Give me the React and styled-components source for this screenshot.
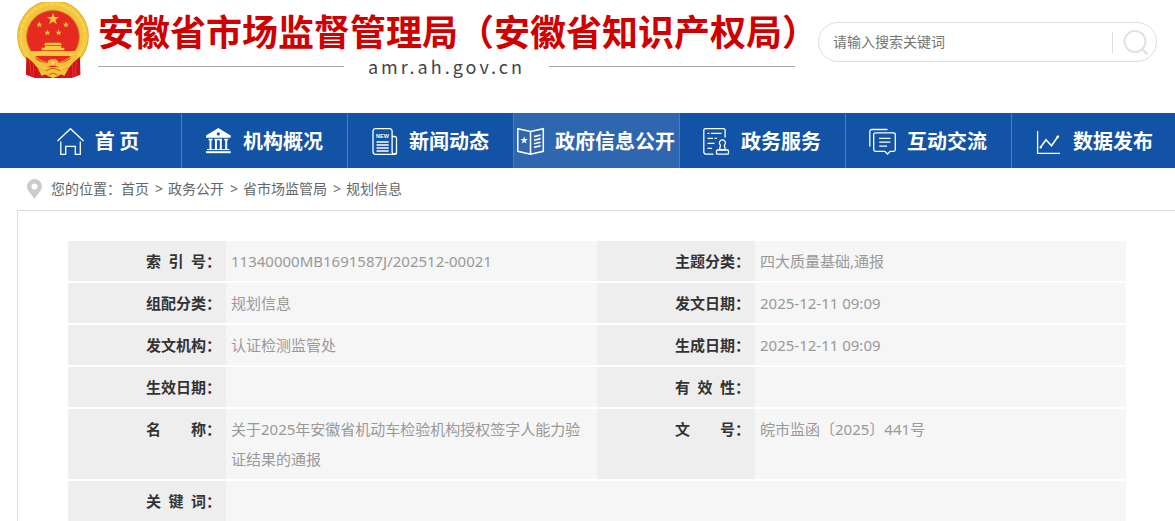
import React, { useState } from "react";
import styled, { createGlobalStyle } from "styled-components";

const GlobalStyle = createGlobalStyle`
  * {
    box-sizing: border-box;
  }
  body {
    margin: 0;
    background: #fff;
    color: #666;
    font-family: "Noto Sans", "Noto Sans CJK SC", sans-serif;
    font-size: 14px;
    overflow-x: hidden;
  }
  a {
    color: inherit;
    text-decoration: none;
  }
`;

const Header = styled.header`
  display: flex;
  justify-content: space-between;
  height: 113px;
  padding: 0 18px 0 17px;
`;
const Brand = styled.a`
  display: flex;
  gap: 9px;
  padding-top: 2px;
`;
const BrandText = styled.div`
  width: 697px;
  padding-top: 12px;
`;
const Title = styled.h1`
  margin: 0;
  color: #d00000;
  font-family: "Liberation Sans", "Noto Sans CJK SC", sans-serif;
  font-size: 36px;
  font-weight: 700;
  line-height: 40px;
  white-space: nowrap;
`;
const Domain = styled.div`
  display: flex;
  align-items: center;
  gap: 24px;
  height: 24px;
  color: #444;
  font-family: "Noto Sans CJK SC", sans-serif;
  font-size: 18px;
  line-height: 24px;
  letter-spacing: 3px;
  &::before,
  &::after {
    content: "";
    flex: 1;
    height: 1px;
    background: #aaa;
  }
`;
const Search = styled.form`
  display: flex;
  align-items: center;
  flex: 0 0 339px;
  height: 40px;
  margin-top: 22px;
  padding: 0 8px 0 14px;
  border: 1px solid #ddd;
  border-radius: 20px;
`;
const SearchInput = styled.input`
  flex: 1;
  min-width: 0;
  padding: 0;
  border: 0;
  outline: 0;
  background: none;
  color: #666;
  font: inherit;
  line-height: 20px;
  &::placeholder {
    color: #757575;
    opacity: 1;
  }
`;
const SearchButton = styled.button`
  display: flex;
  justify-content: flex-end;
  width: 36px;
  height: 21px;
  padding: 0;
  border: 0;
  border-left: 1px solid #ddd;
  background: none;
  cursor: pointer;
  svg {
    overflow: visible;
  }
`;

const Nav = styled.nav`
  display: flex;
  height: 55px;
  padding-left: 16px;
  overflow: hidden;
  background: #1253a5;
`;
const NavItem = styled.a`
  display: flex;
  flex: 1 0 166px;
  align-items: center;
  justify-content: center;
  gap: 10px;
  padding-right: 1px;
  border-right: 1px solid #4a7dbf;
  background: ${(p) => (p.$active ? "#2f66b0" : "transparent")};
  color: #fff;
  font-family: "Noto Sans CJK SC", sans-serif;
  font-size: 20px;
  font-weight: 700;
  line-height: 28px;
  white-space: nowrap;
`;
const NavIcon = styled.svg`
  flex: none;
  width: 28px;
  height: 29px;
  fill: none;
  stroke: #fff;
  stroke-width: 1.3;
`;

const Crumbs = styled.div`
  display: flex;
  align-items: center;
  height: 42px;
  padding-left: 27px;
  line-height: 20px;
  svg {
    margin-right: 9px;
  }
`;
const Separator = styled.span`
  padding: 0 5px 0 6px;
`;

const Panel = styled.main`
  margin-left: 17px;
  padding: 28px 49px 0 50px;
  border-top: 1px solid #ddd;
  border-left: 1px solid #ddd;
`;
const Table = styled.table`
  width: 100%;
  table-layout: fixed;
  border-collapse: separate;
  border-spacing: 0 2px;
  font-size: 15px;
  line-height: 30px;
`;
const Label = styled.th`
  width: 158px;
  padding: 5px;
  background: #eee;
  color: #333;
  font-weight: 700;
  text-align: right;
  vertical-align: top;
  white-space: nowrap;
`;
const LabelText = styled.span`
  display: inline-block;
  width: 4em;
  text-align: justify;
  text-align-last: justify;
`;
const Value = styled.td`
  padding: 5px;
  background: #f6f6f6;
  color: #999;
  vertical-align: top;
`;

const menu = [
  {
    name: "首 页",
    icon: (
      <>
        <path d="M.5 15 13.5 2.7 26.5 15" />
        <path d="M3.8 15.5V28.3H8.7V20.3H18.3V28.3H23.3V15.5" />
      </>
    ),
  },
  {
    name: "机构概况",
    icon: (
      <>
        <path
          d="M13.3 2 25.7 9.6V11.8H1V9.6ZM13.3 6.3a1.6 1.6 0 1 0 0 3.2 1.6 1.6 0 0 0 0-3.2Z"
          fill="#fff"
          fillRule="evenodd"
          stroke="none"
        />
        <path d="M3.5 13.5H7.5M9.5 13.5H17M19.2 13.5H23.2" />
        <path d="M5.5 13V23.5M11 13V23.5M15.8 13V23.5M21.2 13V23.5" strokeWidth="2" />
        <path d="M2 23.6H24.6" strokeWidth="1" />
        <path d="M1 26.2H25.7" strokeWidth="2" />
      </>
    ),
  },
  {
    name: "新闻动态",
    icon: (
      <>
        <path d="M21.3 28.3H4.5A2.5 2.5 0 0 1 2 25.8V5A2.3 2.3 0 0 1 4.3 2.7H18.8A2.3 2.3 0 0 1 21.1 5V25.8A2.2 2.2 0 0 0 25.5 25.8V12.5A2 2 0 0 0 23.5 10.5H21.1M21 28.3H24A2 2 0 0 0 25.5 26" />
        <path d="M5.5 16H17.7M5.5 19H17.7M5.5 22H17.7M5.5 25H17.7" />
        <text
          x="5"
          y="11.5"
          fontFamily="Liberation Sans, sans-serif"
          fontSize="5.5"
          fontWeight="700"
          fill="#fff"
          stroke="none"
        >
          NEW
        </text>
      </>
    ),
  },
  {
    name: "政府信息公开",
    active: true,
    icon: (
      <>
        <path d="M.8 2.8 13.5 5.6 26.3 2.8V25.3L13.5 28.2.8 25.3ZM13.5 5.6V28" strokeWidth="1.5" />
        <path
          d="M7.2 10.2 8.1 13H11L8.7 14.7 9.6 17.6 7.2 15.9 4.8 17.6 5.7 14.7 3.4 13H6.3Z"
          fill="#fff"
          stroke="none"
        />
        <path
          d="M17 10.6 23.6 9M17 14.2 23.6 12.6M17 17.8 23.6 16.2M17 21.4 23.6 19.8"
          strokeWidth="1.6"
        />
      </>
    ),
  },
  {
    name: "政务服务",
    icon: (
      <>
        <path d="M10.5 28.2H3A2.2 2.2 0 0 1 .8 26V4.2A1.5 1.5 0 0 1 2.3 2.7H20.6A1.5 1.5 0 0 1 22.1 4.2V11.5" />
        <path d="M4.5 7.3H6.5M8 7.3H18.5M4.5 12.3H10M11.5 12.3H14M4.5 17.3H11.5M4.5 22.3H9" />
        <path d="M17.5 19.2A3 3 0 1 1 21.3 19.2L22.3 23.7H16.5Z" />
        <rect x="13.5" y="24" width="12" height="4.2" rx="1" />
      </>
    ),
  },
  {
    name: "互动交流",
    icon: (
      <>
        <path d="M.8 20.5V5.5A2 2 0 0 1 2.8 3.5H18.5" />
        <path d="M6.5 6.8H24.5A1.8 1.8 0 0 1 26.3 8.6V23.6A1.8 1.8 0 0 1 24.5 25.4H21.2L18.5 28 15.8 25.4H6.5A1.8 1.8 0 0 1 4.7 23.6V8.6A1.8 1.8 0 0 1 6.5 6.8Z" />
        <path d="M10.2 12.3H21.4M10.2 16.2H21.4M10.2 20.1H18" />
      </>
    ),
  },
  {
    name: "数据发布",
    icon: (
      <>
        <path d="M2.6 5V27.3H25" />
        <path d="M5.8 21 11 13.8 16.5 19.8 22.6 11" strokeWidth="1.6" />
        <circle cx="5.8" cy="21.2" r="1.2" fill="#fff" stroke="none" />
        <circle cx="22.8" cy="10.8" r="1.4" fill="#fff" stroke="none" />
      </>
    ),
  },
];

const crumbs = ["首页", "政务公开", "省市场监管局", "规划信息"];

const rows = [
  ["索 引 号", "11340000MB1691587J/202512-00021", "主题分类", "四大质量基础,通报"],
  ["组配分类", "规划信息", "发文日期", "2025-12-11 09:09"],
  ["发文机构", "认证检测监管处", "生成日期", "2025-12-11 09:09"],
  ["生效日期", "", "有 效 性", ""],
  [
    "名 称",
    "关于2025年安徽省机动车检验机构授权签字人能力验证结果的通报",
    "文 号",
    "皖市监函〔2025〕441号",
  ],
  ["关 键 词", ""],
];

const star = "M0-10 2.4-3.1H9.5L3.8 1.2 5.9 8.1 0 3.9-5.9 8.1-3.8 1.2-9.5-3.1H-2.4Z";

function Emblem() {
  return (
    <svg width="72" height="78" viewBox="22 6 216 234" aria-hidden="true">
      <path d="M54 166 80 176 130 205 182 176 208 166 212 224 186 234H76L49 224Z" fill="#d5141b" />
      <circle cx="130" cy="108" r="93" fill="none" stroke="#dba528" strokeWidth="29" />
      <circle cx="130" cy="108" r="93" fill="none" stroke="#f3c43c" strokeWidth="25" />
      <circle
        cx="130"
        cy="108"
        r="96"
        fill="none"
        stroke="#f7d350"
        strokeWidth="8"
        strokeDasharray="14 3"
      />
      <circle cx="130" cy="110" r="79" fill="#e62a20" stroke="#c98516" strokeWidth="2" />
      <g fill="#f4c93e">
        <path d={star} transform="translate(130 57) scale(1.9)" />
        <path d={star} transform="translate(89 74)" />
        <path d={star} transform="translate(169 74)" />
        <path d={star} transform="translate(113 98)" />
        <path d={star} transform="translate(147 98)" />
        <path d="M107 128H153L157 136H103ZM106 138H154V143H164V151H96V143H106Z" />
        <path d="M62 153H198L192 168H68Z" />
      </g>
      <path d="M75 172Q92 184 108 188L130 176 152 188Q168 184 186 172L176 191 151 202H109L84 191Z" fill="#e62a20" />
      <path d="M60 160Q86 190 113 189 115 177 130 177 145 177 147 189 174 190 200 160L203 172Q178 204 148 202L130 195 112 202Q82 204 57 172Z" fill="#f4c238" />
      <path d="M50 170Q67 182 83 203L77 232 49 223ZM211 170Q194 182 178 203L184 232 212 223Z" fill="#cf1118" />
      <path d="M60 181 64 226M72 193 71 229M200 181 197 226M189 193 190 229" stroke="#e23a34" strokeWidth="3" />
      <path d="M84 205Q106 212 117 206 130 198 143 206 155 212 177 205L164 228Q154 218 144 229L130 234 116 229Q106 218 96 228Z" fill="#f4c238" />
      <circle cx="130" cy="188" r="9" fill="#f8d458" stroke="#cf8b1b" strokeWidth="2" />
      <path d="M108 213Q130 198 152 213M118 225Q130 215 142 225" fill="none" stroke="#cf5a19" strokeWidth="3" />
    </svg>
  );
}

function App() {
  const [keyword, setKeyword] = useState("");
  return (
    <>
      <GlobalStyle />
      <Header>
        <Brand href="#">
          <Emblem />
          <BrandText>
            <Title>安徽省市场监督管理局（安徽省知识产权局）</Title>
            <Domain>amr.ah.gov.cn</Domain>
          </BrandText>
        </Brand>
        <Search onSubmit={(e) => e.preventDefault()}>
          <SearchInput
            type="text"
            aria-label="请输入搜索关键词"
            placeholder="请输入搜索关键词"
            value={keyword}
            onChange={(e) => setKeyword(e.target.value)}
          />
          <SearchButton type="submit" aria-label="搜索">
            <svg width="25" height="24" viewBox="0 0 25 24" fill="none" stroke="#e2e2e2" strokeWidth="2">
              <circle cx="12" cy="9.5" r="10.5" />
              <path d="M19 17 24.5 22.5" strokeWidth="2.4" />
            </svg>
          </SearchButton>
        </Search>
      </Header>
      <Nav>
        {menu.map((item) => (
          <NavItem key={item.name} href="#" $active={item.active}>
            <NavIcon viewBox="0 0 28 29" aria-hidden="true">
              {item.icon}
            </NavIcon>
            {item.name}
          </NavItem>
        ))}
      </Nav>
      <Crumbs>
        <svg width="15" height="20" viewBox="0 0 15 20" aria-hidden="true">
          <path
            d="M7.5 0A7.5 7.5 0 0 0 0 7.5C0 11.5 4.5 15 7.5 20 10.5 15 15 11.5 15 7.5A7.5 7.5 0 0 0 7.5 0ZM7.5 4.5A3 3 0 1 1 7.5 10.5 3 3 0 0 1 7.5 4.5Z"
            fill="#ccc"
            fillRule="evenodd"
          />
        </svg>
        您的位置：
        {crumbs.map((name, index) => (
          <React.Fragment key={name}>
            {index > 0 && <Separator>&gt;</Separator>}
            <a href="#">{name}</a>
          </React.Fragment>
        ))}
      </Crumbs>
      <Panel>
        <Table>
          <tbody>
            {rows.map(([label, value, label2, value2]) => (
              <tr key={label}>
                <Label scope="row">
                  <LabelText>{label}</LabelText>：
                </Label>
                <Value colSpan={label2 ? 1 : 3}>{value}</Value>
                {label2 && (
                  <>
                    <Label scope="row">
                      <LabelText>{label2}</LabelText>：
                    </Label>
                    <Value>{value2}</Value>
                  </>
                )}
              </tr>
            ))}
          </tbody>
        </Table>
      </Panel>
    </>
  );
}

export default App;
